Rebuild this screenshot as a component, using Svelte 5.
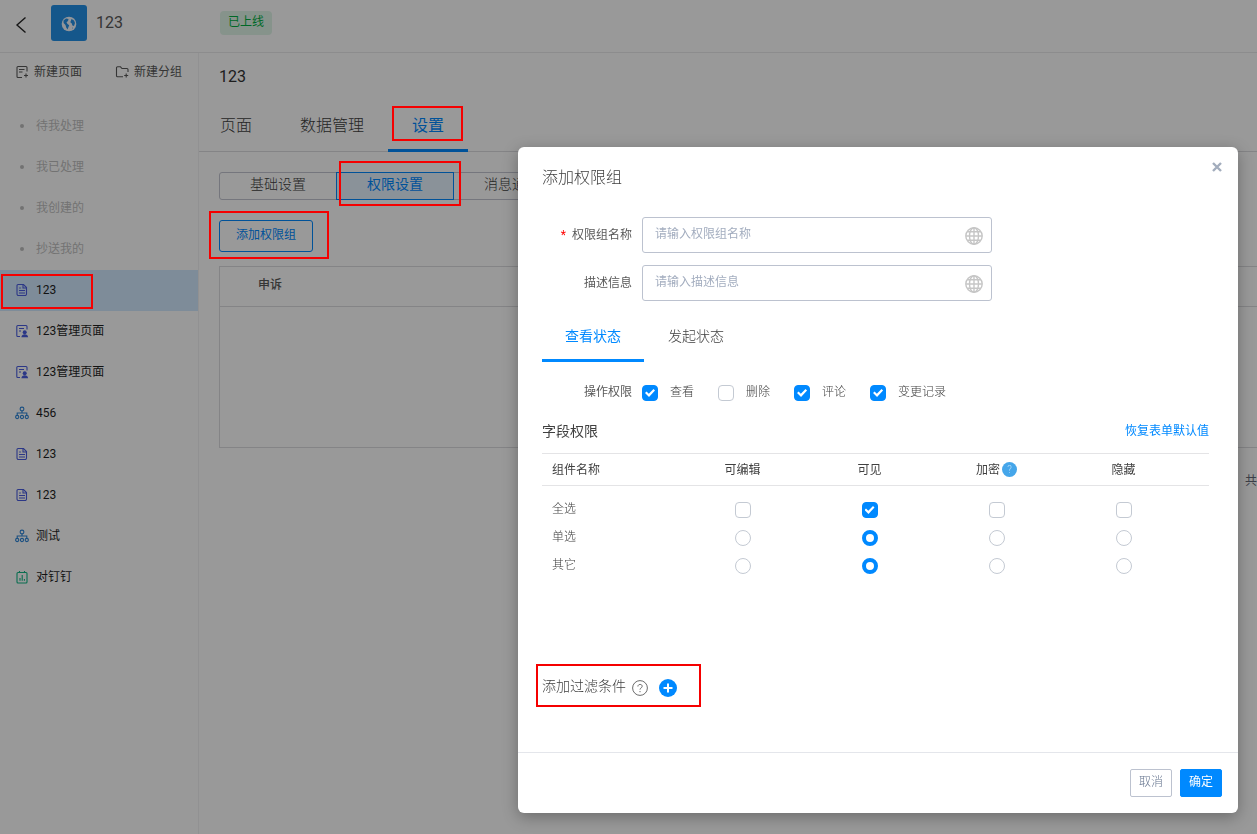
<script>
  const todo = ['待我处理', '我已处理', '我创建的', '抄送我的'];
  const pages = [
    { icon: 'doc', name: '123', active: true },
    { icon: 'manage', name: '123管理页面' },
    { icon: 'manage', name: '123管理页面' },
    { icon: 'flow', name: '456' },
    { icon: 'doc', name: '123' },
    { icon: 'doc', name: '123' },
    { icon: 'flow', name: '测试' },
    { icon: 'report', name: '对钉钉' }
  ];
  const tabs = ['页面', '数据管理', '设置'];
  const segments = ['基础设置', '权限设置', '消息通知'];
  const fields = [
    { id: 'group-name', label: '权限组名称', hint: '请输入权限组名称', required: true },
    { id: 'group-desc', label: '描述信息', hint: '请输入描述信息' }
  ];
  let operations = $state([
    { name: '查看', on: true },
    { name: '删除', on: false },
    { name: '评论', on: true },
    { name: '变更记录', on: true }
  ]);
  const levels = ['可编辑', '可见', '加密', '隐藏'];
  const rows = [
    { name: '全选', type: 'checkbox' },
    { name: '单选', type: 'radio' },
    { name: '其它', type: 'radio' }
  ];
</script>

{#snippet pageIcon(kind)}
  {#if kind === 'doc'}
    <svg class="icon indigo" viewBox="0 0 14 14">
      <path d="M3 1.5h5.5l3 3V11a1.500 1.500 0 0 1-1.500 1.500H3.500A1.500 1.500 0 0 1 2 11V2.500a1 1 0 0 1 1-1z" />
      <path d="M8 1.500V5h3.500M4.200 5h1.600M4 7.500h6M4 10h6" />
    </svg>
  {:else if kind === 'manage'}
    <svg class="icon indigo" viewBox="0 0 14 14">
      <path d="M12 5.500V2.500a1 1 0 0 0-1-1H2.800a1 1 0 0 0-1 1v9a1 1 0 0 0 1 1H5M4 4.500h5M4 7h2" />
      <circle class="solid" cx="9.700" cy="8.200" r="2" />
      <path class="solid" d="M6.400 13.300c0-4 6.700-4 6.700 0z" />
    </svg>
  {:else if kind === 'flow'}
    <svg class="icon azure" viewBox="0 0 14 14">
      <circle cx="7" cy="3" r="1.900" />
      <path d="M7 5v2M2.200 9.200V7h9.600v2.200" />
      <circle cx="2.200" cy="11" r="1.600" /><circle cx="7" cy="11" r="1.600" /><circle cx="11.800" cy="11" r="1.600" />
    </svg>
  {:else}
    <svg class="icon green" viewBox="0 0 14 14">
      <rect x="2" y="2.500" width="10" height="10.500" rx="1" />
      <path d="M4.500 1v2M9.500 1v2M5 10.800V8M7.200 10.800V5M9.400 10.800V9" />
    </svg>
  {/if}
{/snippet}

<div class="page">
  <header class="top">
    <button class="back" aria-label="返回">
      <svg viewBox="0 0 12 18"><path d="M10.500 1.500 2 9l8.500 7.500" /></svg>
    </button>
    <span class="logo">
      <svg viewBox="0 0 16 16">
        <circle cx="8" cy="8" r="7.300" fill="#f4f9ff" />
        <path d="M2.500 4.500 5 2.500 7.500 3 7 5 5.500 6.300 6.500 8 8.200 9.200 7.500 11 6.500 13.500 5.200 11.500 4.500 9 2.600 7zM10.500 3 13 4.500 14 7l-1 3-1.600-.5-.6-2L9.300 6.300zM11 12l1-.7-.8 1.700z" fill="#2491e8" />
      </svg>
    </span>
    <span class="app-name">123</span>
    <span class="status">已上线</span>
  </header>

  <div class="columns">
    <nav class="side">
      <div class="create">
        <button>
          <svg class="icon" viewBox="0 0 14 14"><path d="M12 6.500v-4a1 1 0 0 0-1-1H3a1 1 0 0 0-1 1v9a1 1 0 0 0 1 1h4M4 4.500h5.500M4 7h3.500M11 8.500v4M9 10.500h4" /></svg>
          新建页面
        </button>
        <button>
          <svg class="icon" viewBox="0 0 14 14"><path d="M13 7V4.500a1 1 0 0 0-1-1H7L5.500 1.800h-3a1 1 0 0 0-1 1v8a1 1 0 0 0 1 1H8M11.200 8.500v4M9.200 10.500h4" /></svg>
          新建分组
        </button>
      </div>
      <ul>
        {#each todo as item}
          <li><a class="muted" href="#todo"><span class="dot"></span>{item}</a></li>
        {/each}
        {#each pages as p}
          <li><a class:active={p.active} href="#page">{@render pageIcon(p.icon)}{p.name}</a></li>
        {/each}
      </ul>
    </nav>

    <main>
      <h1>123</h1>
      <div class="tabs">
        {#each tabs as t}
          <button class:on={t === '设置'}>{t}</button>
        {/each}
      </div>
      <div class="content">
        <div class="segments">
          {#each segments as s}
            <button class:on={s === '权限设置'}>{s}</button>
          {/each}
        </div>
        <button class="add">添加权限组</button>
        <div class="groups">
          <div class="groups-head">申诉</div>
          <div class="groups-body"></div>
        </div>
        <div class="pager">共</div>
      </div>
    </main>
  </div>
</div>

<div class="mask"></div>

<div class="mark m-tab"></div>
<div class="mark m-segment"></div>
<div class="mark m-add"></div>
<div class="mark m-page"></div>

<div class="layer">
  <div class="dialog" role="dialog" aria-labelledby="dialog-title">
    <div class="dialog-head">
      <h2 id="dialog-title">添加权限组</h2>
      <button class="close" aria-label="关闭">
        <svg viewBox="0 0 10 10"><path d="M1 1l8 8M9 1l-8 8" /></svg>
      </button>
    </div>

    <div class="dialog-body">
      {#each fields as f}
        <div class="field">
          <label for={f.id}>{#if f.required}<span class="star">*</span>{/if}{f.label}</label>
          <div class="box">
            <input id={f.id} type="text" placeholder={f.hint} />
            <svg viewBox="0 0 18 18">
              <circle cx="9" cy="9" r="8.200" />
              <ellipse cx="9" cy="9" rx="4.500" ry="8.200" />
              <path d="M9 1v16M1 9h16M2.200 4.800h13.600M2.200 13.200h13.600" />
            </svg>
          </div>
        </div>
      {/each}

      <div class="states">
        <button class="on">查看状态</button>
        <button>发起状态</button>
      </div>

      <div class="operations">
        <span class="caption">操作权限</span>
        {#each operations as op}
          <label><input type="checkbox" bind:checked={op.on} />{op.name}</label>
        {/each}
      </div>

      <div class="section">
        <h3>字段权限</h3>
        <a href="#reset">恢复表单默认值</a>
      </div>

      <div class="grid">
        <table>
          <thead>
            <tr>
              <th class="name">组件名称</th>
              {#each levels as l}
                <th>{l}{#if l === '加密'}<span class="tip">?</span>{/if}</th>
              {/each}
              <th class="pad"></th>
            </tr>
          </thead>
          <tbody>
            {#each rows as r, i}
              <tr>
                <td class="name">{r.name}</td>
                {#each levels as l}
                  <td><input type={r.type} name={'level-' + i} aria-label={r.name + l} checked={l === '可见'} /></td>
                {/each}
                <td class="pad"></td>
              </tr>
            {/each}
          </tbody>
        </table>
      </div>

      <div class="filter">
        <span>添加过滤条件</span>
        <svg class="help" viewBox="0 0 16 16">
          <circle cx="8" cy="8" r="7.400" />
          <path d="M5.900 6.500c0-2.800 4.300-2.700 4.300-.2 0 1.600-2.200 1.600-2.200 3.300M8 11v1.200" />
        </svg>
        <button class="plus" aria-label="添加过滤条件">
          <svg viewBox="0 0 18 18"><circle cx="9" cy="9" r="9" fill="#0089ff" /><path d="M9 4.500v9M4.500 9h9" stroke="#fff" stroke-width="2" /></svg>
        </button>
      </div>
    </div>

    <div class="dialog-foot">
      <button class="cancel">取消</button>
      <button class="ok">确定</button>
    </div>
  </div>
</div>

<style>
  :global(body) {
    font-family: Roboto, 'Noto Sans CJK SC', sans-serif;
    font-size: 12px;
    line-height: 20px;
    color: #595959;
    overflow: hidden;
  }
  * { box-sizing: border-box; }
  button {
    font: inherit;
    color: inherit;
    background: none;
    border: 0;
    padding: 0;
    cursor: pointer;
  }
  a { color: inherit; text-decoration: none; }
  svg { display: block; fill: none; flex: none; }
  h1, h2, h3, ul { margin: 0; padding: 0; font-weight: 400; list-style: none; }

  .page {
    display: flex;
    flex-direction: column;
    min-height: 100vh;
    background: #fff;
    overflow: hidden;
  }
  .top {
    display: flex;
    align-items: flex-start;
    height: 53px;
    padding: 5px 15px;
    border-bottom: 1px solid #eaeaec;
  }
  .back { padding: 11px 0; }
  .back svg { width: 12px; height: 18px; stroke: #262626; stroke-width: 1.4; }
  .logo {
    display: grid;
    place-items: center;
    width: 36px;
    height: 36px;
    margin-left: 24px;
    border-radius: 3px;
    background: #2491e8;
  }
  .logo svg { width: 16px; height: 16px; margin-top: 2px; }
  .app-name { width: 124px; margin-left: 9px; font-size: 16px; line-height: 36px; }
  .status {
    height: 24px;
    margin-top: 6px;
    padding: 0 8px;
    border-radius: 4px;
    background: #dff5e8;
    color: #00b042;
    line-height: 22px;
  }

  .columns { display: flex; flex: 1; }
  .side { flex: none; width: 199px; border-right: 1px solid #f2f2f4; }
  .create { display: flex; gap: 33px; height: 53px; padding: 8px 15px; }
  .create button { display: flex; align-items: center; gap: 5px; height: 22px; color: #595959; white-space: nowrap; }
  .icon { width: 14px; height: 14px; stroke: currentColor; stroke-width: 1.1; }
  .indigo { color: #4a5de0; }
  .azure { color: #2e85d8; }
  .green { color: #12b886; }
  .solid { fill: currentColor; stroke: none; }
  .side a {
    display: flex;
    align-items: center;
    gap: 7px;
    height: 41px;
    padding: 0 15px 2px;
    color: #1f1f1f;
  }
  .side a.active { background: #d3e9ff; }
  .side a.muted { color: #bfbfbf; }
  .dot { width: 4px; height: 4px; margin: 0 5px; border-radius: 2px; background: #bfbfbf; }

  main { flex: 1; min-width: 0; }
  h1 { padding: 14px 20px 0; font-size: 16px; color: #333; }
  .tabs { display: flex; height: 65px; border-bottom: 1px solid #dcdce0; }
  .tabs button {
    height: 65px;
    padding: 15px 24px 0;
    border-bottom: 3px solid transparent;
    font-size: 16px;
    font-weight: 300;
    color: #404040;
  }
  .tabs button:first-child { padding-left: 21px; }
  .tabs button.on { color: #0089ff; border-color: #0089ff; font-weight: 400; }
  .content { padding: 20px 0 0 20px; }
  .segments { display: flex; }
  .segments button {
    width: 118px;
    height: 28px;
    padding-bottom: 4px;
    border: 1px solid #c3c5d0;
    margin-right: -1px;
    font-size: 14px;
    font-weight: 300;
    color: #404040;
  }
  .segments button:first-child { border-radius: 3px 0 0 3px; }
  .segments button:last-child { border-radius: 0 3px 3px 0; }
  .segments button.on { z-index: 1; border-color: #0089ff; background: #e6f3ff; color: #0089ff; font-weight: 400; }
  .add {
    display: block;
    height: 32px;
    margin: 20px 0 14px;
    padding: 0 16px 2px;
    border: 1px solid #0089ff;
    border-radius: 3px;
    color: #0089ff;
  }
  .groups { border: 1px solid #dcdce0; border-right: 0; }
  .groups-head { padding: 8px 38px 11px; border-bottom: 1px solid #dcdce0; font-weight: 500; }
  .groups-body { height: 140px; }
  .pager { padding-top: 23px; text-align: right; color: #666a78; }

  .mask { position: fixed; inset: 0; background: rgba(0, 0, 0, 0.4); z-index: 2; }

  .mark { position: absolute; z-index: 3; border: 2px solid #f50000; pointer-events: none; }
  .m-tab { left: 392px; top: 106px; width: 71px; height: 35px; }
  .m-segment { left: 339px; top: 161px; width: 122px; height: 45px; }
  .m-add { left: 209px; top: 211px; width: 120px; height: 48px; }
  .m-page { left: 1px; top: 274px; width: 92px; height: 35px; }

  .layer {
    position: fixed;
    inset: 0;
    z-index: 4;
    display: flex;
    justify-content: flex-end;
    padding: 147px 19px 21px;
  }
  .dialog {
    display: flex;
    flex-direction: column;
    width: 720px;
    border-radius: 6px;
    background: #fff;
    box-shadow: 0 4px 16px rgba(0, 0, 0, 0.3);
  }
  .dialog-head { display: flex; justify-content: space-between; padding: 15px 16px 23px 24px; }
  h2 { font-size: 16px; font-weight: 300; line-height: 32px; color: #404040; }
  .close { align-self: flex-start; }
  .close svg { width: 10px; height: 10px; stroke: #a3adbd; stroke-width: 2.4; }

  .dialog-body { flex: 1; padding: 0 29px 0 24px; }
  .field { display: flex; align-items: center; margin-bottom: 12px; }
  .field label, .caption { width: 90px; text-align: right; }
  .star { margin-right: 6px; color: #f00; }
  .box {
    display: flex;
    align-items: center;
    width: 350px;
    height: 36px;
    margin-left: 10px;
    padding: 0 8px 0 12px;
    border: 1px solid #bcc2cf;
    border-radius: 3px;
  }
  .box input {
    flex: 1;
    min-width: 0;
    height: 34px;
    padding: 0 0 2px;
    border: 0;
    outline: 0;
    background: none;
    font: inherit;
  }
  .box input::placeholder { color: #a3adbf; }
  .box svg { width: 18px; height: 18px; margin-top: 2px; stroke: #c6c6c6; stroke-width: 1.4; }

  .states { display: flex; gap: 1px; }
  .states button {
    height: 49px;
    padding: 0 23px;
    border-bottom: 3px solid transparent;
    font-size: 14px;
    font-weight: 300;
    color: #404040;
  }
  .states button.on { color: #0089ff; border-color: #0089ff; font-weight: 400; }

  input[type='checkbox'], input[type='radio'] {
    appearance: none;
    display: block;
    width: 16px;
    height: 16px;
    margin: 0;
    border: 1px solid #c4cad3;
    border-radius: 4px;
    background: #fff;
  }
  input[type='radio'] { border-radius: 8px; }
  input[type='radio']:checked { border: 4px solid #0089ff; }
  input[type='checkbox']:checked {
    border-color: #0089ff;
    background: #0089ff;
    display: grid;
    place-items: center;
  }
  input[type='checkbox']:checked::before {
    content: '';
    width: 10px;
    height: 8px;
    background: #fff;
    clip-path: polygon(0 50%, 15% 32%, 38% 60%, 85% 0, 100% 18%, 40% 100%);
  }

  .operations { display: flex; align-items: center; margin-top: 20px; font-weight: 300; color: #404040; }
  .operations input[type='checkbox'] { margin-top: 2px; }
  .caption { margin-right: 10px; font-weight: 400; color: #595959; }
  .operations label { display: flex; align-items: center; gap: 12px; margin-right: 24px; }

  .section { display: flex; align-items: center; justify-content: space-between; margin: 19px 0 12px; }
  h3 { font-size: 14px; font-weight: 400; color: #404040; }
  .section a { padding-top: 1px; line-height: 19px; color: #0089ff; }

  table { width: 100%; table-layout: fixed; border-collapse: collapse; }
  thead { border-top: 1px solid #e4e4e6; border-bottom: 1px solid #e4e4e6; }
  th { height: 32px; padding: 0; font-weight: 400; color: #404040; }
  th.name, td.name { width: 137px; padding-left: 10px; text-align: left; }
  .pad { width: 22px; }
  td { height: 28px; padding: 0; font-weight: 300; color: #404040; }
  td.name { padding-bottom: 2px; }
  td input[type] { margin: 0 auto; }
  tbody::before { content: ''; display: block; height: 10px; }
  .tip {
    display: inline-block;
    width: 15px;
    margin-left: 2px;
    border-radius: 8px;
    background: #45a6ea;
    color: #b9e0fb;
    font-size: 10px;
    font-weight: 300;
    line-height: 15px;
    vertical-align: 1px;
  }

  .grid { min-height: 211px; }
  .filter {
    display: flex;
    align-items: center;
    width: 165px;
    height: 43px;
    margin-left: -6px;
    padding: 1px 4px 0;
    border: 2px solid #f50000;
    font-size: 14px;
    font-weight: 300;
    color: #404040;
    white-space: nowrap;
  }
  .help { width: 16px; height: 16px; margin: 4px 11px 0 6px; stroke: #6b6b6b; stroke-width: 1; }
  .plus { margin-top: 4px; }
  .plus svg { width: 18px; height: 18px; }

  .dialog-foot {
    display: flex;
    justify-content: flex-end;
    gap: 8px;
    padding: 16px;
    border-top: 1px solid #e4e6eb;
  }
  .dialog-foot button { width: 42px; height: 28px; padding-bottom: 2px; border: 1px solid #bcc2cf; border-radius: 2px; }
  .cancel { color: #66758f; font-weight: 300; }
  .dialog-foot .ok { background: #0089ff; border-color: #0089ff; color: #fff; }
</style>
